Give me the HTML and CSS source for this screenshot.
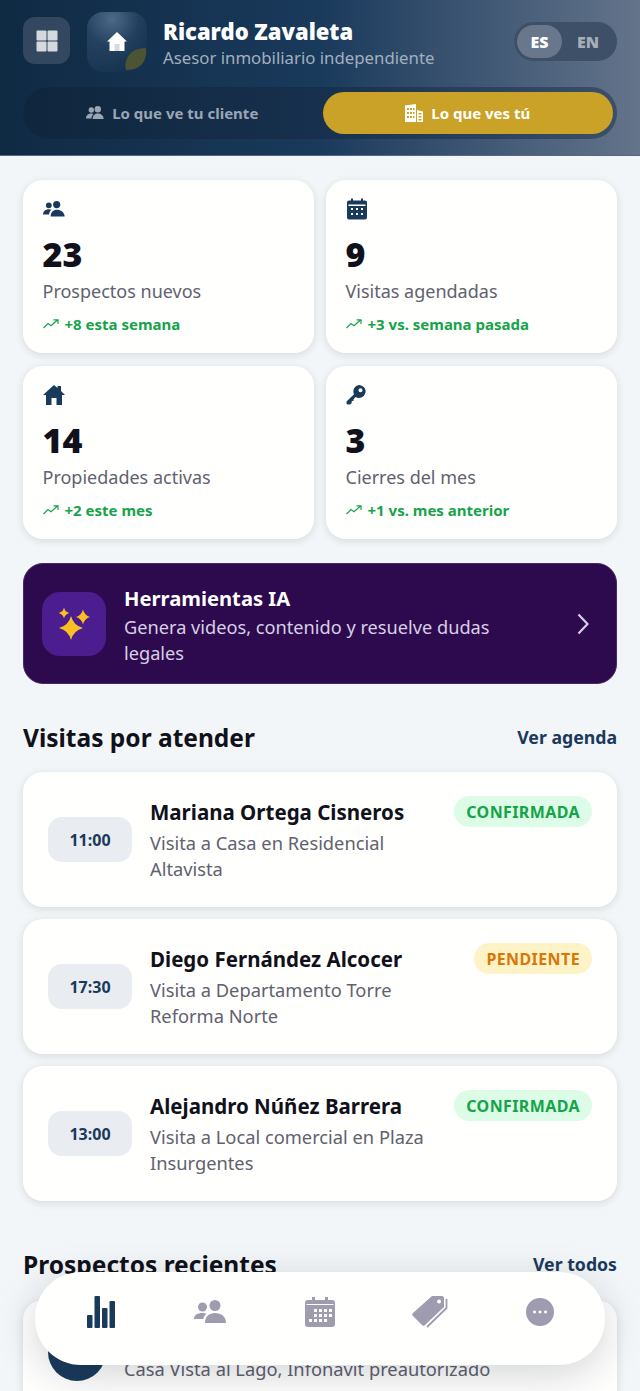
FILE: index.html
```html
<!DOCTYPE html>
<html lang="es">
<head>
<meta charset="utf-8">
<title>Panel del asesor</title>
<link rel="stylesheet" href="styles.css">
</head>
<body>
<div class="page">
<header class="hero">
  <div class="hero-top">
    <button class="menu-btn" aria-label="Menú">
      <svg width="22" height="22" viewBox="0 0 22 22"><rect x="0.5" y="0.5" width="10" height="10" rx="1"/><rect x="11.5" y="0.5" width="10" height="10" rx="1"/><rect x="0.5" y="11.5" width="10" height="10" rx="1"/><rect x="11.5" y="11.5" width="10" height="10" rx="1"/></svg>
    </button>
    <div class="logo">
      <svg class="logo-house" width="22" height="22" viewBox="0 0 22 22"><path fill="#fff" d="M11 1 L21 10.5 L18.5 10.5 L18.5 20 L3.5 20 L3.5 10.5 L1 10.5 Z"/><rect x="8.5" y="13" width="5" height="7" fill="#d6d9dd"/></svg>
      <svg class="logo-leaf" width="24" height="24" viewBox="0 0 24 24"><path fill="#4c5434" d="M23 1 C24 12 20 23 3 23 C1 16 4 9 9 5 C13 2 18 1 23 1 Z"/></svg>
    </div>
    <div class="identity">
      <div class="name">Ricardo Zavaleta</div>
      <div class="role">Asesor inmobiliario independiente</div>
    </div>
    <div class="lang"><span class="lang-on">ES</span><span class="lang-off">EN</span></div>
  </div>
  <div class="switch">
    <div class="switch-item">
      <svg width="18" height="14" viewBox="0 0 18 14"><circle cx="5.3" cy="4" r="2.7"/><circle cx="11.8" cy="3.2" r="3.2"/><path d="M0 12.5 C0 9 2.5 7.4 5.3 7.4 C6.3 7.4 7 7.6 7.7 8 C6.3 9 5.5 10.5 5.5 12.5 Z"/><path d="M6.6 13 C6.6 9.6 9 7.6 11.8 7.6 C14.8 7.6 17.6 9.6 17.6 13 Z"/></svg>
      Lo que ve tu cliente
    </div>
    <div class="switch-item switch-item-on">
      <svg width="18" height="18" viewBox="0 0 18 18"><path fill="#fff" fill-rule="evenodd" d="M0 1.5 L11 0 L11 18 L0 18 Z M2 4 v2 h2 v-2 Z M5 4 v2 h2 v-2 Z M8 4 v2 h1.5 v-2 Z M2 8 v2 h2 v-2 Z M5 8 v2 h2 v-2 Z M8 8 v2 h1.5 v-2 Z M2 12 v2 h2 v-2 Z M5 12 v2 h2 v-2 Z M8 12 v2 h1.5 v-2 Z"/><path fill="#fff" fill-rule="evenodd" d="M12 6 L18 7.5 L18 18 L12 18 Z M13.5 9 v1.5 h3 v-1.5 Z M13.5 12 v1.5 h3 v-1.5 Z M13.5 15 v1.5 h3 v-1.5 Z"/></svg>
      Lo que ves tú
    </div>
  </div>
</header>

<main class="content">
  <section class="stats">
    <article class="stat">
      <svg class="stat-icon" width="22" height="16" viewBox="0 0 22 16"><circle cx="5.8" cy="4.3" r="2.9"/><circle cx="13.7" cy="3.6" r="3.6"/><path d="M0 13.6 C0 10.4 2.6 8.2 5.8 8.2 C6.9 8.2 7.8 8.4 8.5 8.8 C6.9 10.2 6.1 11.8 6.1 13.6 Z"/><path d="M7.6 15.5 C7.6 11.3 10.3 8.7 13.9 8.7 C17.6 8.7 21.6 11.3 21.6 15.5 Z"/></svg>
      <div class="stat-num">23</div>
      <div class="stat-label">Prospectos nuevos</div>
      <div class="stat-trend"><svg width="16" height="10" viewBox="0 0 16 10"><path d="M0.5 9 L5 4.5 L8 6.8 L14.5 1 M10.5 0.8 H15 V5"/></svg>+8 esta semana</div>
    </article>
    <article class="stat">
      <svg class="stat-icon" width="22" height="22" viewBox="0 0 22 22"><path fill-rule="evenodd" d="M5 0.5 h2 v2 h8 v-2 h2 v2 h2 a2 2 0 0 1 2 2 v15 a2 2 0 0 1 -2 2 h-16 a2 2 0 0 1 -2 -2 v-15 a2 2 0 0 1 2 -2 h2 Z M2.5 8 v-1.5 h17 v1.5 Z M5 10 v2 h2 v-2 Z M10 10 v2 h2 v-2 Z M15 10 v2 h2 v-2 Z M5 15 v2 h2 v-2 Z M10 15 v2 h2 v-2 Z M15 15 v2 h2 v-2 Z"/></svg>
      <div class="stat-num">9</div>
      <div class="stat-label">Visitas agendadas</div>
      <div class="stat-trend"><svg width="16" height="10" viewBox="0 0 16 10"><path d="M0.5 9 L5 4.5 L8 6.8 L14.5 1 M10.5 0.8 H15 V5"/></svg>+3 vs. semana pasada</div>
    </article>
    <article class="stat">
      <svg class="stat-icon" width="22" height="20" viewBox="0 0 22 20"><path d="M11 0 L14.5 3 V1 H18 V6 L22 10 L19 10 V20 H13.5 V13 H8.5 V20 H3 V10 L0 10 Z"/></svg>
      <div class="stat-num">14</div>
      <div class="stat-label">Propiedades activas</div>
      <div class="stat-trend"><svg width="16" height="10" viewBox="0 0 16 10"><path d="M0.5 9 L5 4.5 L8 6.8 L14.5 1 M10.5 0.8 H15 V5"/></svg>+2 este mes</div>
    </article>
    <article class="stat">
      <svg class="stat-icon" width="20" height="20" viewBox="0 0 20 20"><path fill-rule="evenodd" d="M13 0 A6.5 6.5 0 1 1 9.6 12 L7.5 14.2 V16 H5.7 V18 L4 19.5 H1.5 L0.5 18.5 V16.5 L8 9.2 A6.5 6.5 0 0 1 13 0 Z M14.5 3.3 A2 2 0 1 0 14.5 7.3 A2 2 0 1 0 14.5 3.3 Z"/></svg>
      <div class="stat-num">3</div>
      <div class="stat-label">Cierres del mes</div>
      <div class="stat-trend"><svg width="16" height="10" viewBox="0 0 16 10"><path d="M0.5 9 L5 4.5 L8 6.8 L14.5 1 M10.5 0.8 H15 V5"/></svg>+1 vs. mes anterior</div>
    </article>
  </section>

  <section class="ai">
    <div class="ai-icon">
      <svg width="33" height="33" viewBox="0 0 33 33"><path fill="#fbbf24" d="M13 9 Q15.500 18.500 25 21 Q15.500 23.500 13 33 Q10.500 23.500 1 21 Q10.500 18.500 13 9 Z M6 0.500 Q7 5 11.500 6 Q7 7 6 11.500 Q5 7 0.500 6 Q5 5 6 0.500 Z M25 2.500 Q26.500 8.500 32 10 Q26.500 11.500 25 17.500 Q23.500 11.500 18 10 Q23.500 8.500 25 2.500 Z"/></svg>
    </div>
    <div class="ai-text">
      <div class="ai-title">Herramientas IA</div>
      <div class="ai-sub">Genera videos, contenido y resuelve dudas legales</div>
    </div>
    <svg class="ai-chevron" width="12" height="22" viewBox="0 0 12 22"><path d="M1.500 1.500 L10.500 11 L1.500 20.500"/></svg>
  </section>

  <div class="section-head"><h2>Visitas por atender</h2><a>Ver agenda</a></div>

  <section class="visits">
    <article class="visit">
      <div class="time">11:00</div>
      <div class="visit-body">
        <div class="visit-top"><div class="visit-name">Mariana Ortega Cisneros</div><span class="badge badge-ok">CONFIRMADA</span></div>
        <div class="visit-desc">Visita a Casa en Residencial Altavista</div>
      </div>
    </article>
    <article class="visit">
      <div class="time">17:30</div>
      <div class="visit-body">
        <div class="visit-top"><div class="visit-name">Diego Fernández Alcocer</div><span class="badge badge-wait">PENDIENTE</span></div>
        <div class="visit-desc">Visita a Departamento Torre Reforma Norte</div>
      </div>
    </article>
    <article class="visit">
      <div class="time">13:00</div>
      <div class="visit-body">
        <div class="visit-top"><div class="visit-name">Alejandro Núñez Barrera</div><span class="badge badge-ok">CONFIRMADA</span></div>
        <div class="visit-desc">Visita a Local comercial en Plaza Insurgentes</div>
      </div>
    </article>
  </section>

  <div class="section-head section-head-next"><h2>Prospectos recientes</h2><a>Ver todos</a></div>

  <article class="prospect">
    <div class="avatar"></div>
    <div class="prospect-desc">Casa Vista al Lago, Infonavit preautorizado</div>
  </article>
</main>

<nav class="dock">
  <svg class="dock-on" width="28" height="32" viewBox="0 0 28 32"><rect x="0" y="19" width="5.500" height="13" rx="1"/><rect x="7.500" y="0" width="5.500" height="32" rx="1"/><rect x="15" y="12" width="5.500" height="20" rx="1"/><rect x="22.500" y="5" width="5.500" height="27" rx="1"/></svg>
  <svg class="dock-off" width="32" height="23" viewBox="0 0 32 23"><circle cx="8.500" cy="7" r="4.500"/><circle cx="21" cy="5.500" r="5.500"/><path d="M0 19 C0 15 3.500 13 8.500 13 C10 13 11.500 13.300 12.500 13.800 C10.500 15.300 9.500 17 9.500 19 Z"/><path d="M11 23 C11 16.500 15 13 21 13 C27 13 32 16.500 32 23 Z"/></svg>
  <svg class="dock-off" width="30" height="30" viewBox="0 0 30 30"><path fill-rule="evenodd" d="M7 0 h3 v3 h10 v-3 h3 v3 h4 a3 3 0 0 1 3 3 v21 a3 3 0 0 1 -3 3 h-24 a3 3 0 0 1 -3 -3 v-21 a3 3 0 0 1 3 -3 h4 Z M1.500 8 h27 v-1 h-27 Z M9 12 v3 h3 v-3 Z M14 12 v3 h3 v-3 Z M19 12 v3 h3 v-3 Z M24 12 v3 h3 v-3 Z M9 17 v3 h3 v-3 Z M14 17 v3 h3 v-3 Z M19 17 v3 h3 v-3 Z M24 17 v3 h3 v-3 Z M4 22 v3 h3 v-3 Z M9 22 v3 h3 v-3 Z M14 22 v3 h3 v-3 Z M19 22 v3 h3 v-3 Z"/></svg>
  <svg class="dock-off" width="36" height="32" viewBox="0 0 36 32"><path fill-rule="evenodd" d="M20 0 H30 a2 2 0 0 1 2 2 V11 L13 29 a2 2 0 0 1 -3 0 L1 20 a2 2 0 0 1 0 -3 Z M27 3.500 a2 2 0 1 0 0.100 0 Z"/><path fill="none" stroke="#a09cb0" stroke-width="1.800" d="M34.500 3 V12 L15 31"/></svg>
  <svg class="dock-off" width="28" height="28" viewBox="0 0 28 28"><path fill-rule="evenodd" d="M14 0 A14 14 0 1 1 14 28 A14 14 0 1 1 14 0 Z M8.500 12.500 a1.500 1.500 0 1 0 0.100 0 Z M14 12.500 a1.500 1.500 0 1 0 0.100 0 Z M19.500 12.500 a1.500 1.500 0 1 0 0.100 0 Z"/></svg>
</nav>
</div>
</body>
</html>
```
FILE: styles.css
```css
* { box-sizing: border-box; }
html, body { margin: 0; padding: 0; }
body {
  width: 640px;
  height: 1391px;
  overflow: hidden;
  background: #f3f6f8;
  font-family: "Noto Sans", "Open Sans", sans-serif;
  color: #11111b;
}
.page { height: 1391px; overflow: hidden; position: relative; }

.hero {
  height: 156px;
  padding: 12px 23px 0;
  background: linear-gradient(90deg, #0f2a43 0%, #1a3a5c 50%, #64748b 100%);
  border-bottom: 1px solid #56677f;
}
.hero-top { display: flex; align-items: center; height: 60px; }
.menu-btn {
  width: 47px; height: 47px;
  padding: 0;
  border: 0;
  border-radius: 12px;
  background: #334760;
  display: flex; align-items: center; justify-content: center;
  margin: -3px 17px 0 0;
}
.menu-btn svg { fill: #d5d9de; }
.logo {
  width: 60px; height: 60px;
  border-radius: 16px;
  margin-right: 16px;
  position: relative;
  background:
    radial-gradient(circle at 42% 12%, rgba(96, 124, 154, .75) 0%, rgba(50, 80, 112, .45) 42%, rgba(26, 58, 92, 0) 82%),
    linear-gradient(90deg, #1c3856 0%, rgba(26, 58, 92, 0) 100%);
  display: flex; align-items: center; justify-content: center;
}
.logo-house { margin-top: -1px; }
.logo-leaf { position: absolute; right: 0; bottom: 1px; }
.identity { flex: 1; min-width: 0; }
.name { font-size: 22px; font-weight: 900; color: #fff; line-height: 28px; margin-top: 2px; }
.role { font-size: 16.800px; color: #a2afbf; line-height: 25px; }
.lang {
  width: 103px; height: 39px;
  border-radius: 20px;
  background: #3e5068;
  padding: 3px;
  display: flex; align-items: center;
  font-size: 16px; font-weight: 900;
  margin-top: -1px;
}
.lang span { display: flex; align-items: center; justify-content: center; height: 33px; }
.lang-on { width: 45px; border-radius: 17px; background: #68778b; color: #fff; }
.lang-off { flex: 1; color: #a6aeb9; }

.switch {
  margin-top: 15px;
  height: 52px;
  border-radius: 26px;
  padding: 5px 4px;
  background: linear-gradient(90deg, #10263e 0%, #17304d 50%, #3c4f68 100%);
  display: flex; gap: 5px;
}
.switch-item {
  flex: 1;
  display: flex; align-items: center; justify-content: center; gap: 8px;
  border-radius: 21px;
  font-size: 15px; font-weight: 700;
  color: #9aa6b5;
}
.switch-item svg { fill: #9aa6b5; }
.switch-item-on { background: #c9a227; color: #fff; }

.content { padding: 24px 23px 0; }
.stats { display: grid; grid-template-columns: 1fr 1fr; gap: 13px 12px; }
.stat {
  height: 173px;
  padding: 18px 19.500px 0;
  background: #fffffe;
  border-radius: 20px;
  box-shadow: 0 2px 9px rgba(17, 24, 39, .12);
}
.stat-icon { fill: #1a3a5c; display: block; height: 22px; }
.stat-num { font-size: 34px; font-weight: 900; line-height: 44px; margin-top: 12px; }
.stat-label { font-size: 18px; color: #61616f; line-height: 24px; margin-top: 3px; }
.stat-trend {
  display: flex; align-items: center; gap: 6px;
  margin-top: 11px;
  font-size: 15px; font-weight: 700; color: #16a34a; line-height: 20px;
}
.stat-trend svg { fill: none; stroke: #16a34a; stroke-width: 1.200; }

.ai {
  margin-top: 24px;
  height: 121px;
  background: #2d0a4e;
  border: 1px solid #45296a;
  border-radius: 20px;
  padding: 0 27px 0 18px;
  display: flex; align-items: center;
}
.ai-icon {
  width: 64px; height: 64px;
  flex: none;
  border-radius: 18px;
  background: #4c1d8f;
  display: flex; align-items: center; justify-content: center;
  margin-right: 18px;
}
.ai-text { flex: 1; min-width: 0; padding-right: 40px; margin-top: 2px; }
.ai-title { font-size: 20.200px; font-weight: 700; color: #fff; line-height: 31px; }
.ai-sub { font-size: 18.200px; color: #d8cfe6; line-height: 26px; }
.ai-chevron { fill: none; stroke: #d8cfe6; stroke-width: 2.200; flex: none; }

.section-head {
  display: flex; justify-content: space-between; align-items: center;
  margin-top: 35px;
  height: 36px;
}
.section-head h2 { margin: 0; font-size: 24.500px; font-weight: 700; color: #11111b; }
.section-head a { font-size: 17.700px; font-weight: 700; color: #1a3a5c; }
.section-head-next { margin-top: 45px; }

.visits { display: flex; flex-direction: column; gap: 12px; margin-top: 17px; }
.visit {
  height: 135px;
  padding: 24px 25px 0 25px;
  background: #fffffe;
  border-radius: 20px;
  box-shadow: 0 2px 9px rgba(17, 24, 39, .12);
  display: flex; gap: 18px;
}
.time {
  width: 84px; height: 45px;
  flex: none;
  margin-top: 21px;
  border-radius: 14px;
  background: #e9edf1;
  color: #1a3a5c;
  font-size: 16px; font-weight: 700;
  display: flex; align-items: center; justify-content: center;
}
.visit-body { flex: 1; min-width: 0; }
.visit-top { display: flex; justify-content: space-between; align-items: flex-start; }
.visit-name { font-size: 20.500px; font-weight: 700; line-height: 32px; }
.badge {
  height: 31px;
  padding: 0 12px;
  border-radius: 16px;
  font-size: 16px; font-weight: 700;
  letter-spacing: .4px;
  display: flex; align-items: center;
}
.badge-ok { background: #dcfce7; color: #16a34a; }
.badge-wait { background: #fef3c7; color: #d97706; }
.visit-desc { font-size: 18.300px; color: #61616f; line-height: 26px; margin-top: 2px; max-width: 290px; }

.prospect {
  margin-top: 18px;
  height: 200px;
  padding: 23px 25px;
  background: #fffffe;
  border-radius: 20px;
  box-shadow: 0 2px 9px rgba(17, 24, 39, .12);
  display: flex; gap: 18px;
  align-items: flex-start;
}
.avatar { width: 58px; height: 58px; flex: none; border-radius: 50%; background: #1a3a5c; }
.prospect-desc { font-size: 18.300px; color: #61616f; line-height: 26px; margin-top: 33px; }

.dock {
  position: fixed;
  left: 35px; top: 1272px;
  width: 570px; height: 93px;
  border-radius: 46px;
  background: #fffffe;
  box-shadow: 0 10px 40px rgba(17, 24, 39, .18);
  display: grid; grid-template-columns: repeat(5, 1fr);
  align-items: center; justify-items: center;
  padding: 0 10px 14px;
}
.dock-on { fill: #1a3a5c; margin-left: 2px; }
.dock-off { fill: #a09cb0; }
```
